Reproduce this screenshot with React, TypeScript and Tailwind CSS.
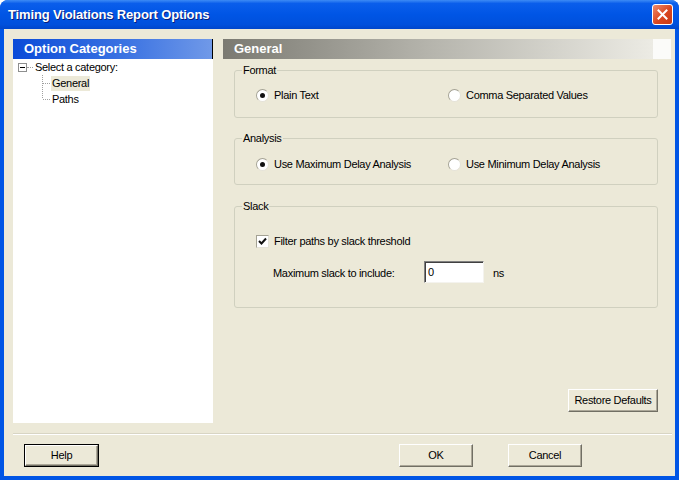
import React from 'react'

const ui = "font-['Liberation_Sans',Arial,sans-serif] text-[11px] tracking-[-0.3px] text-black"

function Radio({ checked, label }: { checked?: boolean; label: string }) {
  return (
    <div className="flex items-center h-[14px]">
      <span className="w-[13px] h-[13px] rounded-full bg-white border border-t-[#A4A294] border-l-[#A4A294] border-r-[#E4E2D8] border-b-[#E4E2D8] flex items-center justify-center">
        {checked && <span className="w-[5px] h-[5px] rounded-full bg-[#111]" />}
      </span>
      <span className="ml-[5px]">{label}</span>
    </div>
  )
}

function Group({ title, className, children }: { title: string; className: string; children: React.ReactNode }) {
  return (
    <div className={`border border-[#D0D0BF] rounded-[3px] flex flex-col ${className}`}>
      <span className="-mt-[8px] ml-[7px] px-[1px] self-start leading-[14px] bg-[#ECE9D8]">{title}</span>
      {children}
    </div>
  )
}

function Button({ label, width, isDefault }: { label: string; width: string; isDefault?: boolean }) {
  const inner = (
    <div
      className={`${width} h-full flex items-center justify-center bg-[#ECE9D8] border border-t-white border-l-white border-r-[#716F64] border-b-[#716F64] shadow-[inset_-1px_-1px_#ACA899]`}
    >
      {label}
    </div>
  )
  if (isDefault) return <div className="h-[23px] border border-black flex">{inner}</div>
  return <div className="h-[23px] flex">{inner}</div>
}

function Connector({ last }: { last?: boolean }) {
  return (
    <svg width="9" height="16" className="shrink-0">
      <line x1="0.5" y1="0" x2="0.5" y2={last ? 8 : 16} stroke="#A0A0A0" strokeDasharray="1 1" />
      <line x1="1" y1="8.5" x2="9" y2="8.5" stroke="#A0A0A0" strokeDasharray="1 1" />
    </svg>
  )
}

export default function App() {
  return (
    <div className={`w-[679px] h-[480px] bg-[#0055E5] rounded-t-[8px] flex flex-col overflow-hidden ${ui}`}>
      {/* Title bar */}
      <div className="h-[29px] shrink-0 flex items-center pl-[8px] pr-[6px] bg-[linear-gradient(to_bottom,#3D8BF5_0%,#0A5EEB_12%,#0055E5_50%,#0050DC_85%,#0046CB_100%)]">
        <span className="flex-1 text-white font-bold text-[13px] tracking-[-0.15px] [text-shadow:1px_1px_#0A1E7A]">
          Timing Violations Report Options
        </span>
        <div className="w-[21px] h-[21px] rounded-[3px] border border-white bg-[linear-gradient(135deg,#EE8B6C,#D9461F_55%,#C63A16)] flex items-center justify-center">
          <svg width="11" height="11" viewBox="0 0 11 11">
            <path d="M1.5 1.5 L9.5 9.5 M9.5 1.5 L1.5 9.5" stroke="white" strokeWidth="2" strokeLinecap="square" />
          </svg>
        </div>
      </div>

      {/* Client area */}
      <div className="flex-1 mx-[4px] mb-[4px] bg-[#ECE9D8] flex flex-col">
        <div className="flex gap-[10px] pl-[9px] pr-[4px] pt-[10px] h-[394px]">
          {/* Left panel */}
          <div className="w-[200px] h-[384px] bg-white flex flex-col">
            <div className="h-[20px] shrink-0 flex items-center pl-[11px] border-r border-black text-white font-bold text-[13px] tracking-[0px] bg-[linear-gradient(to_right,#0A4BD8,#3A72E2_55%,#7099E8)]">
              Option Categories
            </div>
            <div className="flex items-center h-[16px] pl-[5px]">
              <span className="w-[9px] h-[9px] border border-[#8E8F8F] bg-white flex items-center justify-center">
                <span className="w-[5px] h-[1px] bg-black" />
              </span>
              <span className="w-[6px] border-t border-dotted border-[#A0A0A0]" />
              <span className="ml-[2px]">Select a category:</span>
            </div>
            <div className="flex items-center h-[16px] pl-[29px]">
              <Connector />
              <span className="bg-[#ECE9D8] px-[1px] h-[15px] leading-[15px]">General</span>
            </div>
            <div className="flex items-center h-[16px] pl-[29px]">
              <Connector last />
              <span className="px-[1px]">Paths</span>
            </div>
          </div>

          {/* Right panel */}
          <div className="flex-1 flex flex-col">
            <div className="h-[20px] shrink-0 flex items-center pl-[11px] text-white font-bold text-[13px] tracking-[0px] bg-[linear-gradient(to_right,#7B7A72,#B4B3AB_45%,#ECEBE4_96%,#FBFBF9_96%)]">
              General
            </div>
            <div className="flex-1 flex flex-col pl-[11px] pr-[13px] pt-[11px] pb-[11px]">
              <Group title="Format" className="h-[48px]">
                <div className="flex mt-[11px] pl-[21px]">
                  <div className="w-[192px]"><Radio checked label="Plain Text" /></div>
                  <Radio label="Comma Separated Values" />
                </div>
              </Group>
              <Group title="Analysis" className="h-[47px] mt-[20px]">
                <div className="flex mt-[12px] pl-[21px]">
                  <div className="w-[192px]"><Radio checked label="Use Maximum Delay Analysis" /></div>
                  <Radio label="Use Minimum Delay Analysis" />
                </div>
              </Group>
              <Group title="Slack" className="h-[102px] mt-[21px]">
                <div className="flex items-center h-[14px] mt-[21px] pl-[21px]">
                  <span className="w-[13px] h-[13px] bg-white border border-t-[#A4A294] border-l-[#A4A294] border-r-[#E4E2D8] border-b-[#E4E2D8] flex items-center justify-center">
                    <svg width="9" height="9" viewBox="0 0 9 9">
                      <path d="M1 4 L3.5 6.5 L8 1.5" stroke="#111" strokeWidth="2" fill="none" />
                    </svg>
                  </span>
                  <span className="ml-[5px]">Filter paths by slack threshold</span>
                </div>
                <div className="flex items-center mt-[13px] pl-[38px]">
                  <span className="w-[151px] pt-[2px]">Maximum slack to include:</span>
                  <div className="w-[60px] h-[22px] bg-white border border-t-[#808080] border-l-[#808080] border-r-[#F4F3EE] border-b-[#F4F3EE] shadow-[inset_1px_1px_#404040] pl-[3px] flex items-center">
                    0
                  </div>
                  <span className="ml-[9px] pt-[2px]">ns</span>
                </div>
              </Group>
              <div className="mt-auto flex justify-end">
                <Button label="Restore Defaults" width="w-[90px]" />
              </div>
            </div>
          </div>
        </div>

        {/* Separator */}
        <div className="mx-[9px] mr-[3px] mt-[10px] h-[2px] border-t border-[#D8D5C4] border-b border-b-white" />

        {/* Bottom buttons */}
        <div className="flex mt-[9px] pl-[20px]">
          <Button label="Help" width="w-[73px]" isDefault />
          <div className="ml-[300px]"><Button label="OK" width="w-[74px]" /></div>
          <div className="ml-[35px]"><Button label="Cancel" width="w-[74px]" /></div>
        </div>
      </div>
    </div>
  )
}
